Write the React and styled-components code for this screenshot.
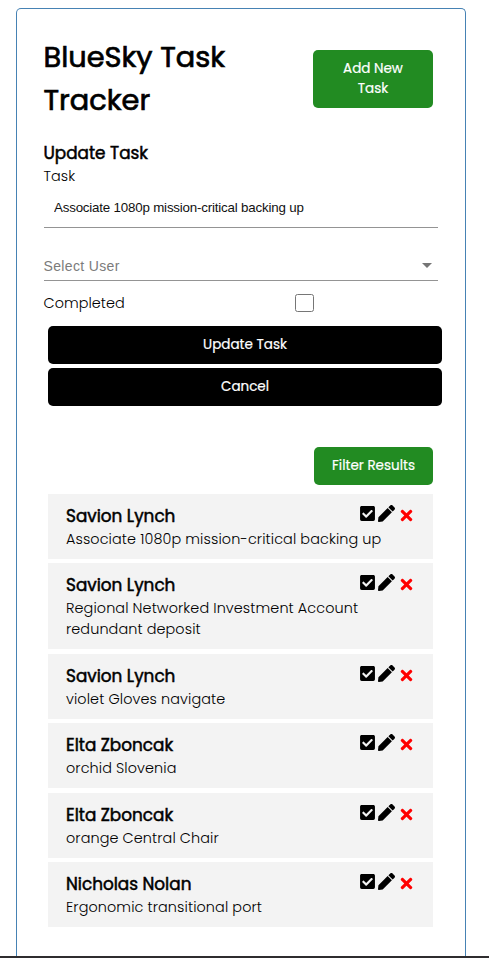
import React from 'react';
import styled, { createGlobalStyle } from 'styled-components';
import { FaCheckSquare, FaPen, FaTimes } from 'react-icons/fa';

const GlobalStyle = createGlobalStyle`
  * { box-sizing: border-box; }
  body {
    margin: 0;
    background: #fff;
    color: #000;
    font-family: Poppins, Inter, sans-serif;
    font-size: 14.4px;
    font-weight: 300;
  }
  h1, h2, h3, p { margin: 0; }
`;

const Page = styled.div`
  height: 958px;
  padding: 8px 23px 0 16px;
  overflow: hidden;
  display: flex;
  flex-direction: column;
  border-bottom: 2px solid #2f2d2f;
`;

const Card = styled.main`
  flex: 1;
  border: 1px solid steelblue;
  border-bottom: 0;
  border-radius: 5px 5px 0 0;
  padding: 27px 27px 0 26.5px;
`;

const Header = styled.header`
  display: flex;
  justify-content: space-between;
  align-items: flex-start;
  padding-right: 5px;
  height: 106px;
`;

const Title = styled.h1`
  width: 210px;
  font-size: 28.8px;
  line-height: 43px;
  font-weight: 400;
  -webkit-text-stroke: 0.7px currentColor;
`;

const Button = styled.button`
  display: block;
  border: 0;
  border-radius: 5px;
  padding: 9px 17px;
  width: ${(p) => p.$width};
  margin: ${(p) => p.$margin || '0'};
  background: ${(p) => p.$color};
  color: #fff;
  font-family: inherit;
  font-size: 13.5px;
  font-weight: 400;
  line-height: 20px;
  -webkit-text-stroke: 0.2px currentColor;
`;

const FormTitle = styled.h2`
  font-size: 16.84px;
  line-height: 22px;
  padding-bottom: 2px;
  font-weight: 400;
  -webkit-text-stroke: 0.5px currentColor;
`;

const Label = styled.label`
  display: block;
  line-height: 21px;
  letter-spacing: 0.05px;
`;

const TaskInput = styled.input`
  display: block;
  width: 394px;
  height: 41px;
  padding: 0 10px 0 10.5px;
  border: 0;
  border-bottom: 1px solid #949494;
  background: transparent;
  color: #111;
  font: 400 13.33px 'Liberation Sans', sans-serif;
  letter-spacing: -0.19px;
  outline: 0;
`;

const UserSelect = styled.div`
  display: flex;
  justify-content: space-between;
  align-items: center;
  width: 394px;
  height: 30px;
  margin-top: 23px;
  padding-right: 6px;
  border-bottom: 1px solid #949494;
  color: #7b7b7b;
  font: 400 14px 'Liberation Sans', sans-serif;
  letter-spacing: 0.35px;
`;

const Arrow = styled.span`
  border: 5px solid transparent;
  border-top-color: #757575;
  border-bottom: 0;
`;

const CompletedRow = styled.div`
  display: flex;
  align-items: center;
  justify-content: space-between;
  width: 270.4px;
  height: 45px;
`;

const Checkbox = styled.input`
  appearance: none;
  width: 18.6px;
  height: 18px;
  margin: 0 0 1px;
  border: 1px solid #767676;
  border-radius: 2.5px;
  background: #fff;
`;

const FormActions = styled.div`
  display: grid;
  gap: 4px;
  padding-left: 4.5px;
`;

const TaskList = styled.section`
  display: flex;
  flex-direction: column;
  gap: 4.4px;
  margin: 9px 5px 0 4.5px;
`;

const TaskRow = styled.article`
  display: flex;
  justify-content: space-between;
  min-height: 65px;
  padding: 11px 18px 9px;
  background: #f3f3f3;
`;

const TaskText = styled.div`
  flex: 1;
  margin-right: -60px;
`;

const UserName = styled.h3`
  font-size: 16.84px;
  line-height: 22px;
  padding-bottom: 2px;
  font-weight: 400;
  -webkit-text-stroke: 0.5px currentColor;
`;

const Description = styled.p`
  line-height: 21px;
  letter-spacing: 0.1px;
  white-space: pre-line;
`;

const RowIcons = styled.div`
  display: flex;
  gap: 3px;
  height: 17px;
  font-size: 17px;

  svg:first-child { margin-right: -0.5px; }
`;

const RemoveIcon = styled(FaTimes)`
  margin-top: 2px;
  color: red;
`;

const tasks = [
  ['Savion Lynch', 'Associate 1080p mission-critical backing up'],
  ['Savion Lynch', 'Regional Networked Investment Account\nredundant deposit'],
  ['Savion Lynch', 'violet Gloves navigate'],
  ['Elta Zboncak', 'orchid Slovenia'],
  ['Elta Zboncak', 'orange Central Chair'],
  ['Nicholas Nolan', 'Ergonomic transitional port'],
];

export default function App() {
  return (
    <Page>
      <GlobalStyle />
      <Card>
        <Header>
          <Title>BlueSky Task Tracker</Title>
          <Button $color="forestgreen" $width="120px" $margin="14px 0 0">Add New Task</Button>
        </Header>
        <FormTitle>Update Task</FormTitle>
        <Label>Task</Label>
        <TaskInput defaultValue="Associate 1080p mission-critical backing up" />
        <UserSelect>Select User<Arrow /></UserSelect>
        <CompletedRow>
          <Label>Completed</Label>
          <Checkbox type="checkbox" />
        </CompletedRow>
        <FormActions>
          <Button $color="#000" $width="394px">Update Task</Button>
          <Button $color="#000" $width="394px">Cancel</Button>
        </FormActions>
        <Button $color="forestgreen" $width="119px" $margin="41px 5px 0 auto">Filter Results</Button>
        <TaskList>
          {tasks.map(([name, text], i) => (
            <TaskRow key={i}>
              <TaskText>
                <UserName>{name}</UserName>
                <Description>{text}</Description>
              </TaskText>
              <RowIcons>
                <FaCheckSquare />
                <FaPen />
                <RemoveIcon />
              </RowIcons>
            </TaskRow>
          ))}
        </TaskList>
      </Card>
    </Page>
  );
}
